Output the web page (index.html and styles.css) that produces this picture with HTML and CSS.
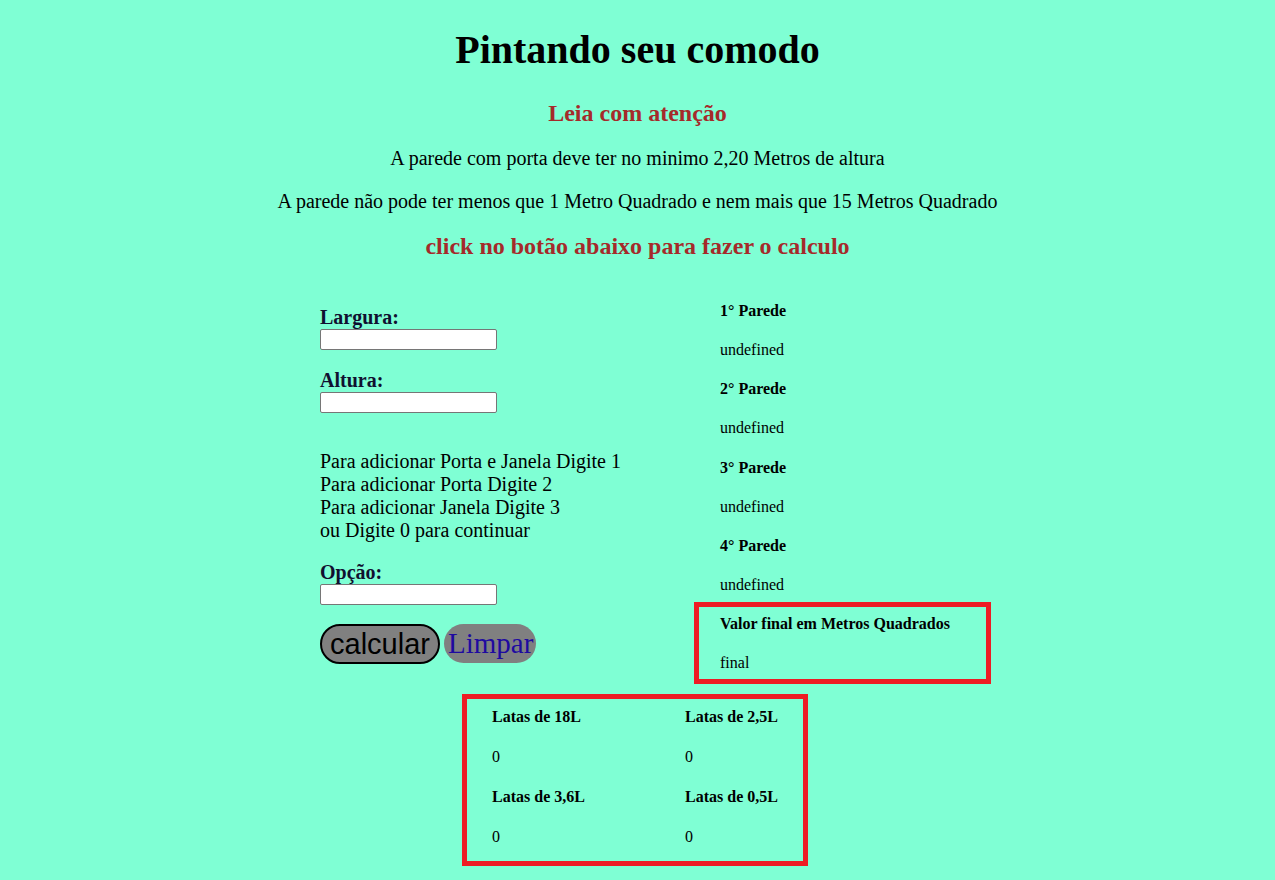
FILE: index.html
```html
<!DOCTYPE html>
<html lang="pt-BR">
<head>
<meta charset="utf-8">
<title>Pintando seu comodo</title>
<link rel="stylesheet" href="styles.css">
</head>
<body>
<header class="intro">
  <h1 class="title">Pintando seu comodo</h1>
  <h2 class="warn">Leia com atenção</h2>
  <p class="rule">A parede com porta deve ter no minimo 2,20 Metros de altura</p>
  <p class="rule">A parede não pode ter menos que 1 Metro Quadrado e nem mais que 15 Metros Quadrado</p>
  <h2 class="warn">click no botão abaixo para fazer o calculo</h2>
</header>

<main class="calc">
  <form class="inputs">
    <label class="field-label" for="largura">Largura:</label>
    <input class="field" id="largura" type="text">
    <label class="field-label gap" for="altura">Altura:</label>
    <input class="field" id="altura" type="text">
    <div class="options">
      <span>Para adicionar Porta e Janela Digite 1</span>
      <span>Para adicionar Porta Digite 2</span>
      <span>Para adicionar Janela Digite 3</span>
      <span>ou Digite 0 para continuar</span>
    </div>
    <label class="field-label gap" for="opcao">Opção:</label>
    <input class="field" id="opcao" type="text">
    <div class="actions">
      <button type="button" class="btn-calc">calcular</button>
      <button type="reset" class="btn-clear">Limpar</button>
    </div>
  </form>

  <section class="results">
    <h4 class="res-title">1° Parede</h4>
    <p class="res-value">undefined</p>
    <h4 class="res-title">2° Parede</h4>
    <p class="res-value">undefined</p>
    <h4 class="res-title">3° Parede</h4>
    <p class="res-value">undefined</p>
    <h4 class="res-title">4° Parede</h4>
    <p class="res-value">undefined</p>
    <div class="final-box">
      <h4 class="res-title">Valor final em Metros Quadrados</h4>
      <p class="res-value">final</p>
    </div>
  </section>
</main>

<section class="cans">
  <h4 class="res-title">Latas de 18L</h4>
  <h4 class="res-title">Latas de 2,5L</h4>
  <p class="res-value">0</p>
  <p class="res-value">0</p>
  <h4 class="res-title">Latas de 3,6L</h4>
  <h4 class="res-title">Latas de 0,5L</h4>
  <p class="res-value">0</p>
  <p class="res-value">0</p>
</section>
</body>
</html>
```

FILE: styles.css
```css
html {
  background: #7fffd4;
}

body {
  margin: 0 8px 8px;
  background: #7fffd4;
  font-family: "Liberation Serif", "Times New Roman", serif;
  font-size: 20px;
  color: #000;
}

.intro {
  text-align: center;
  padding-top: 27px;
}

.title {
  font-size: 40px;
  font-weight: bold;
  margin: 0 0 26.8px;
  line-height: 46px;
}

.warn {
  font-size: 24px;
  font-weight: bold;
  color: #a52a2a;
  margin: 19.9px 0;
  line-height: 27.6px;
}

.rule {
  font-size: 20px;
  margin: 20px 0;
  line-height: 23px;
}

.calc {
  display: flex;
  padding-left: 312px;
}

.inputs {
  width: 374px;
  display: flex;
  flex-direction: column;
  align-items: flex-start;
  padding-top: 25px;
}

.field-label {
  font-weight: bold;
  line-height: 23px;
  color: #101030;
}

.field-label.gap {
  margin-top: 19px;
}

.field {
  width: 177px;
  height: 21px;
  box-sizing: border-box;
  border: 1px solid #767676;
  border-radius: 2px;
  padding: 1px 2px;
  background: #fff;
  margin: 0;
}

.options {
  display: flex;
  flex-direction: column;
  line-height: 23px;
  margin-top: 37px;
}

.actions {
  display: flex;
  align-items: center;
  gap: 4px;
  margin-top: 19px;
}

.btn-calc {
  font-family: "Liberation Sans", Arial, sans-serif;
  font-size: 29px;
  line-height: 34px;
  padding: 1px 8px;
  background: #808080;
  color: #000;
  border: 2px solid #000;
  border-radius: 20px;
  margin: 0;
}

.btn-clear {
  font-family: "Liberation Serif", "Times New Roman", serif;
  font-size: 29px;
  line-height: 33px;
  padding: 3px 3px 3px 4px;
  background: #808080;
  color: #1e0aa0;
  border: none;
  border-radius: 20px;
  margin: 0;
}

.results {
  width: 297px;
  display: flex;
  flex-direction: column;
  gap: 21.2px;
  padding-top: 21px;
}

.results > .res-title,
.results > .res-value {
  padding-left: 26px;
}

.res-title {
  font-size: 16px;
  font-weight: bold;
  line-height: 18px;
  margin: 0;
}

.res-value {
  font-size: 16px;
  line-height: 18px;
  margin: 0;
}

.final-box {
  margin-top: -13px;
  border: 5px solid #ed1c24;
  padding: 8px 0 7px 21px;
  display: flex;
  flex-direction: column;
  gap: 21px;
}

.cans {
  margin: 10px 0 0 454px;
  width: 346px;
  box-sizing: border-box;
  border: 5px solid #ed1c24;
  padding: 9px 0 15px 25px;
  display: grid;
  grid-template-columns: 193px 1fr;
  row-gap: 22px;
}
```
